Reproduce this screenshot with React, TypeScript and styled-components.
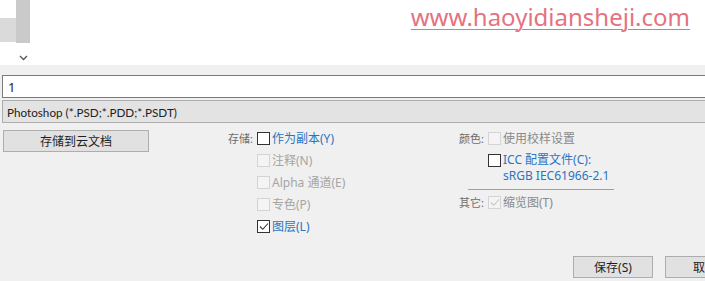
import React from 'react';
import { styled, createGlobalStyle } from 'styled-components';

const GlobalStyle = createGlobalStyle`
  html, body {
    margin: 0;
    padding: 0;
    width: 705px;
    height: 281px;
    overflow: hidden;
    background: #f0f0f0;
  }
  body {
    font-family: "Noto Sans", "Noto Sans CJK SC", sans-serif;
    font-size: 12px;
    color: #1e1e1e;
  }
`;

// Top white strip with the scroll stub and the watermark url
const TopStrip = styled.div`
  display: flex;
  height: 65px;
  background: #fff;
`;

const StubBlock = styled.div`
  width: 16px;
  height: 24px;
  margin-top: 18px;
  background: #dadada;
`;

const StubColumn = styled.div`
  width: 14px;
  display: flex;
  flex-direction: column;
  align-items: center;
`;

const StubBar = styled.div`
  width: 14px;
  height: 43px;
  background: #cacaca;
`;

const Chevron = styled.svg`
  margin-top: 12px;
`;

const Url = styled.a`
  margin-left: auto;
  margin-right: 15px;
  font-family: "Noto Sans", sans-serif;
  font-size: 24px;
  color: #e5727f;
  text-decoration: underline;
  text-decoration-thickness: 1px;
  text-underline-offset: 3px;
`;

// Dialog
const Dialog = styled.div`
  display: flex;
  flex-direction: column;
  padding-top: 10px;
`;

const NameInput = styled.div`
  margin-left: 2px;
  height: 21px;
  background: #fff;
  border: 1px solid #7a7a7a;
  border-right: none;
  display: flex;
  align-items: center;
  padding-left: 5px;
  font-size: 13px;
`;

const FormatCombo = styled.div`
  margin-left: 2px;
  margin-top: 2px;
  height: 21px;
  background: #e3e3e3;
  border: 1px solid #adadad;
  border-right: none;
  display: flex;
  align-items: center;
  padding-left: 4px;
  font-family: "Lato", "Noto Sans", sans-serif;
  font-size: 11.7px;
  color: #222;
`;

const Body = styled.div`
  display: grid;
  grid-template-columns: 228px 231px 1fr;
  padding-top: 4px;
  height: 129px;
`;

const Button = styled.div<{ width: number }>`
  width: ${p => p.width}px;
  height: 20px;
  box-sizing: content-box;
  background: #e1e1e1;
  border: 1px solid #adadad;
  display: flex;
  align-items: center;
  justify-content: center;
  font-size: 12px;
  color: #1e1e1e;
  flex-shrink: 0;
`;

const LeftCol = styled.div`
  padding-left: 3px;
  padding-top: 3px;
`;

const OptionGrid = styled.div<{ rows?: string }>`
  display: grid;
  grid-template-columns: 29px 15px auto;
  grid-template-rows: ${p => p.rows || 'none'};
  grid-auto-rows: 22px;
  align-items: center;
  align-content: start;
`;

const Label = styled.span`
  color: #6d6d6d;
  white-space: nowrap;
  font-size: 11px;
`;

const Box = styled.span<{ disabled?: boolean; top?: boolean }>`
  width: 11px;
  height: 11px;
  border: 1px solid ${p => (p.disabled ? '#d4d4d4' : '#333')};
  background: ${p => (p.disabled ? '#f4f4f4' : '#fff')};
  display: flex;
  align-items: center;
  justify-content: center;
  ${p => p.top && 'align-self: start; margin-top: 5px;'}
`;

const OptText = styled.span<{ tone: 'blue' | 'gray' | 'dim' }>`
  white-space: nowrap;
  color: ${p =>
    p.tone === 'blue' ? '#2b74c2' : p.tone === 'gray' ? '#8a8a8a' : '#a5a5a5'};
`;

const Stack = styled.div`
  display: flex;
  flex-direction: column;
  line-height: 16px;
  align-self: start;
  padding-top: 3px;
`;

const Separator = styled.div`
  grid-column: 1 / 4;
  margin-left: 9px;
  width: 146px;
  height: 1px;
  background: #a0a0a0;
  align-self: end;
  margin-bottom: 1px;
`;

const Footer = styled.div`
  display: flex;
  gap: 12px;
  padding-left: 573px;
`;

function Check({ disabled }: { disabled?: boolean }) {
  return (
    <svg width="10" height="9" viewBox="0 0 10 9">
      <path
        d="M1 4.5 L3.8 7.3 L9 1.5"
        fill="none"
        stroke={disabled ? '#c4c4c4' : '#333'}
        strokeWidth="1.1"
      />
    </svg>
  );
}

function CheckBox({ disabled, checked, top }: { disabled?: boolean; checked?: boolean; top?: boolean }) {
  return (
    <Box disabled={disabled} top={top}>
      {checked && <Check disabled={disabled} />}
    </Box>
  );
}

export default function App() {
  return (
    <>
      <GlobalStyle />
      <TopStrip>
        <StubBlock />
        <StubColumn>
          <StubBar />
          <Chevron width="9" height="6" viewBox="0 0 9 6">
            <path d="M1 1 L4.5 4.5 L8 1" fill="none" stroke="#555" strokeWidth="1.3" />
          </Chevron>
        </StubColumn>
        <Url>www.haoyidiansheji.com</Url>
      </TopStrip>
      <Dialog>
        <NameInput>1</NameInput>
        <FormatCombo>Photoshop (*.PSD;*.PDD;*.PSDT)</FormatCombo>
        <Body>
          <LeftCol>
            <Button width={144}>存储到云文档</Button>
          </LeftCol>
          <OptionGrid>
            <Label>存储:</Label>
            <CheckBox />
            <OptText tone="blue">作为副本(Y)</OptText>
            <span />
            <CheckBox disabled />
            <OptText tone="dim">注释(N)</OptText>
            <span />
            <CheckBox disabled />
            <OptText tone="dim">Alpha 通道(E)</OptText>
            <span />
            <CheckBox disabled />
            <OptText tone="dim">专色(P)</OptText>
            <span />
            <CheckBox checked />
            <OptText tone="blue">图层(L)</OptText>
          </OptionGrid>
          <OptionGrid rows="22px 35px 7px 22px">
            <Label>颜色:</Label>
            <CheckBox disabled />
            <OptText tone="gray">使用校样设置</OptText>
            <span />
            <CheckBox top />
            <Stack>
              <OptText tone="blue">ICC 配置文件(C):</OptText>
              <OptText tone="blue">sRGB IEC61966-2.1</OptText>
            </Stack>
            <Separator />
            <Label>其它:</Label>
            <CheckBox disabled checked />
            <OptText tone="gray">缩览图(T)</OptText>
          </OptionGrid>
        </Body>
        <Footer>
          <Button width={78}>保存(S)</Button>
          <Button width={78}>取消</Button>
        </Footer>
      </Dialog>
    </>
  );
}
